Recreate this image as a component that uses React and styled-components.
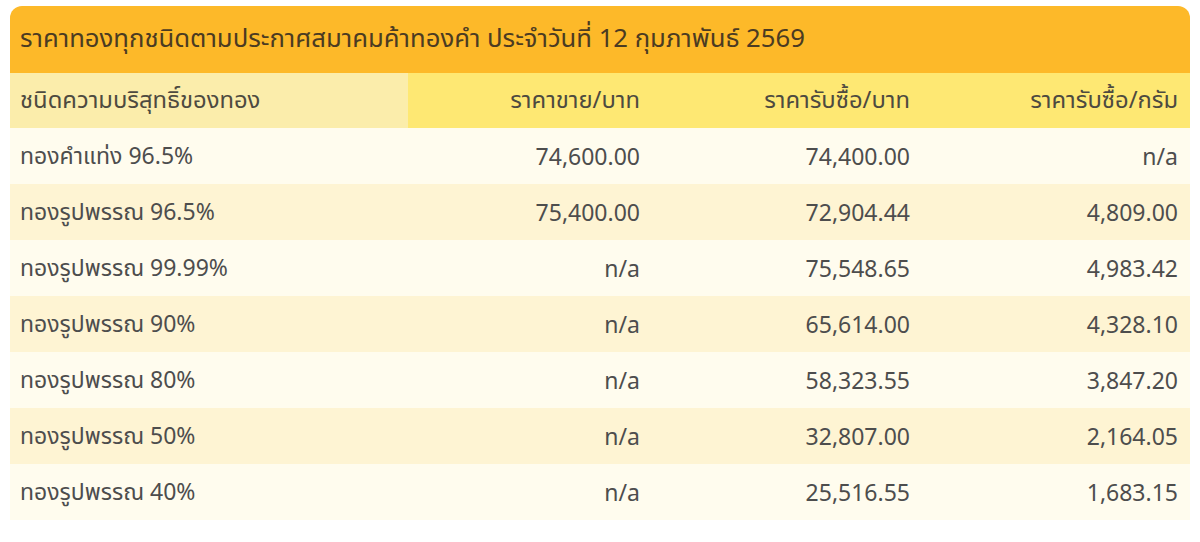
import React from 'react';
import styled, { createGlobalStyle } from 'styled-components';

const GlobalStyle = createGlobalStyle`
  body {
    margin: 0;
    background: #fff;
    font-family: "Noto Sans", "Noto Sans Thai", "DejaVu Sans", sans-serif;
  }
`;

const Page = styled.div`
  padding: 6px 10px 0 10px;
`;

const Card = styled.div`
  width: 1180px;
`;

const TitleBar = styled.div`
  height: 67px;
  background: #fdb929;
  border-radius: 12px 12px 0 0;
  display: flex;
  align-items: center;
  padding: 0 10px;
  font-size: 25.7px;
  color: #4b3b22;
`;

const Grid = styled.div`
  display: grid;
  grid-template-columns: 398px 244px 270px 268px;
`;

const HeadCell = styled.div`
  height: 55px;
  display: flex;
  align-items: center;
  justify-content: ${({ $left }) => ($left ? 'flex-start' : 'flex-end')};
  padding: ${({ $left }) => ($left ? '0 0 0 10px' : '0 12px 0 0')};
  background: ${({ $left }) => ($left ? '#fbedab' : '#fee873')};
  font-size: 23.8px;
  color: #4d4a40;
`;

const Cell = styled.div`
  height: 56px;
  display: flex;
  align-items: center;
  justify-content: ${({ $left }) => ($left ? 'flex-start' : 'flex-end')};
  padding: ${({ $left }) => ($left ? '0 0 0 10px' : '0 12px 0 0')};
  background: ${({ $alt }) => ($alt ? '#fef4d3' : '#fffcee')};
  font-size: 23px;
  color: #4d4d4d;
`;

const rows = [
  ['ทองคำแท่ง 96.5%', '74,600.00', '74,400.00', 'n/a'],
  ['ทองรูปพรรณ 96.5%', '75,400.00', '72,904.44', '4,809.00'],
  ['ทองรูปพรรณ 99.99%', 'n/a', '75,548.65', '4,983.42'],
  ['ทองรูปพรรณ 90%', 'n/a', '65,614.00', '4,328.10'],
  ['ทองรูปพรรณ 80%', 'n/a', '58,323.55', '3,847.20'],
  ['ทองรูปพรรณ 50%', 'n/a', '32,807.00', '2,164.05'],
  ['ทองรูปพรรณ 40%', 'n/a', '25,516.55', '1,683.15'],
];

const headers = ['ชนิดความบริสุทธิ์ของทอง', 'ราคาขาย/บาท', 'ราคารับซื้อ/บาท', 'ราคารับซื้อ/กรัม'];

export default function App() {
  return (
    <>
      <GlobalStyle />
      <Page>
        <Card>
          <TitleBar>ราคาทองทุกชนิดตามประกาศสมาคมค้าทองคำ ประจำวันที่ 12 กุมภาพันธ์ 2569</TitleBar>
          <Grid>
            {headers.map((h, i) => (
              <HeadCell key={h} $left={i === 0}>{h}</HeadCell>
            ))}
            {rows.map((r, ri) =>
              r.map((c, ci) => (
                <Cell key={ri + '-' + ci} $left={ci === 0} $alt={ri % 2 === 1}>{c}</Cell>
              ))
            )}
          </Grid>
        </Card>
      </Page>
    </>
  );
}
